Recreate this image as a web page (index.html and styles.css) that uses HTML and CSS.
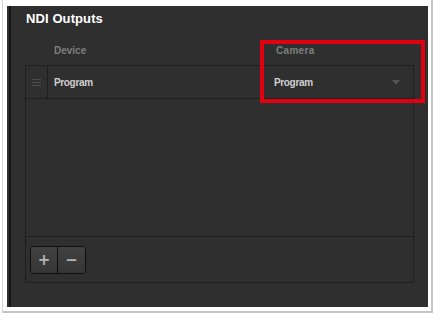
FILE: index.html
```html
<!DOCTYPE html>
<html>
<head>
<meta charset="utf-8">
<link rel="stylesheet" href="styles.css">
</head>
<body>
<div class="frame">
  <div class="panel">
    <h1 class="title">NDI Outputs</h1>
    <div class="heads">
      <span class="head head-device">Device</span>
      <span class="head head-camera">Camera</span>
    </div>
    <div class="table">
      <div class="list">
        <div class="row">
          <div class="handle">
            <span class="bar"></span><span class="bar"></span><span class="bar"></span>
          </div>
          <div class="cell device">Program</div>
          <div class="cell camera">
            <span>Program</span>
            <svg class="arrow" width="8" height="5" viewBox="0 0 8 5"><path d="M0 0H8L4 4.5Z" fill="#555"/></svg>
          </div>
        </div>
      </div>
      <div class="footer">
        <div class="btns">
          <button class="btn btn-add">+</button>
          <button class="btn btn-del">−</button>
        </div>
      </div>
    </div>
    <div class="highlight"></div>
  </div>
</div>
</body>
</html>
```
FILE: styles.css
```css
* { box-sizing: border-box; }
html, body { margin: 0; padding: 0; background: #fff; }
body {
  width: 435px;
  height: 315px;
  font-family: "Liberation Sans", Arial, sans-serif;
  overflow: hidden;
}
.frame {
  margin-left: 2px;
  width: 431px;
  height: 313px;
  background: #fff;
  border-left: 1px solid #d4d4d4;
  border-right: 2px solid #c4c4c4;
  border-bottom: 2px solid #c4c4c4;
  padding: 6px 2px 4px 4px;
}
.panel {
  position: relative;
  width: 421px;
  height: 301px;
  background: #2f2f2f;
  box-shadow: inset 2px 0 0 #2f2f2f, inset 4px 0 0 #141414;
  padding: 5px 0 0 18px;
}
.title {
  margin: 0;
  font-size: 13px;
  line-height: 16px;
  font-weight: bold;
  color: #fff;
  padding-left: 1px;
  letter-spacing: 0.1px;
}
.heads {
  display: flex;
  margin-top: 18px;
  height: 12px;
  line-height: 12px;
}
.head {
  font-size: 10px;
  font-weight: bold;
  color: #7e7e7e;
}
.head-device { margin-left: 29px; width: 222px; }
.head-camera { letter-spacing: 0.3px; }
.table {
  margin-top: 8px;
  width: 389px;
  height: 218px;
  border: 1px solid #1f1f1f;
  display: flex;
  flex-direction: column;
}
.list {
  height: 171px;
  border-bottom: 1px solid #1f1f1f;
}
.row {
  display: flex;
  height: 33px;
  border-bottom: 1px solid #1f1f1f;
}
.handle {
  width: 22px;
  border-right: 1px solid #1f1f1f;
  display: flex;
  flex-direction: column;
  justify-content: center;
  align-items: center;
  gap: 2px;
}
.bar {
  display: block;
  width: 9px;
  height: 1px;
  background: #4c4c4c;
}
.cell {
  font-size: 10px;
  font-weight: bold;
  color: #d0d0d0;
  letter-spacing: -0.35px;
  display: flex;
  align-items: center;
  padding-top: 1px;
}
.device { width: 225px; padding-left: 6px; }
.camera {
  flex: 1;
  justify-content: space-between;
  padding-left: 1px;
  padding-right: 13px;
}
.arrow { display: block; }
.footer {
  flex: 1;
  padding: 9px 0 0 4px;
}
.btns {
  display: inline-flex;
  height: 28px;
  border: 1px solid #0e0e0e;
  border-radius: 4px;
  overflow: hidden;
  background: #3a3a3a;
}
.btn {
  width: 27px;
  height: 100%;
  border: 0;
  padding: 0;
  margin: 0;
  background: linear-gradient(#414141, #363636);
  color: #b5b5b5;
  font-family: "DejaVu Sans", sans-serif;
  font-weight: bold;
  font-size: 15px;
  line-height: 26px;
}
.btn-add { border-right: 1px solid #0e0e0e; }
.highlight {
  position: absolute;
  left: 253px;
  top: 34px;
  width: 165px;
  height: 63px;
  border: 4px solid #e3000e;
}
```
